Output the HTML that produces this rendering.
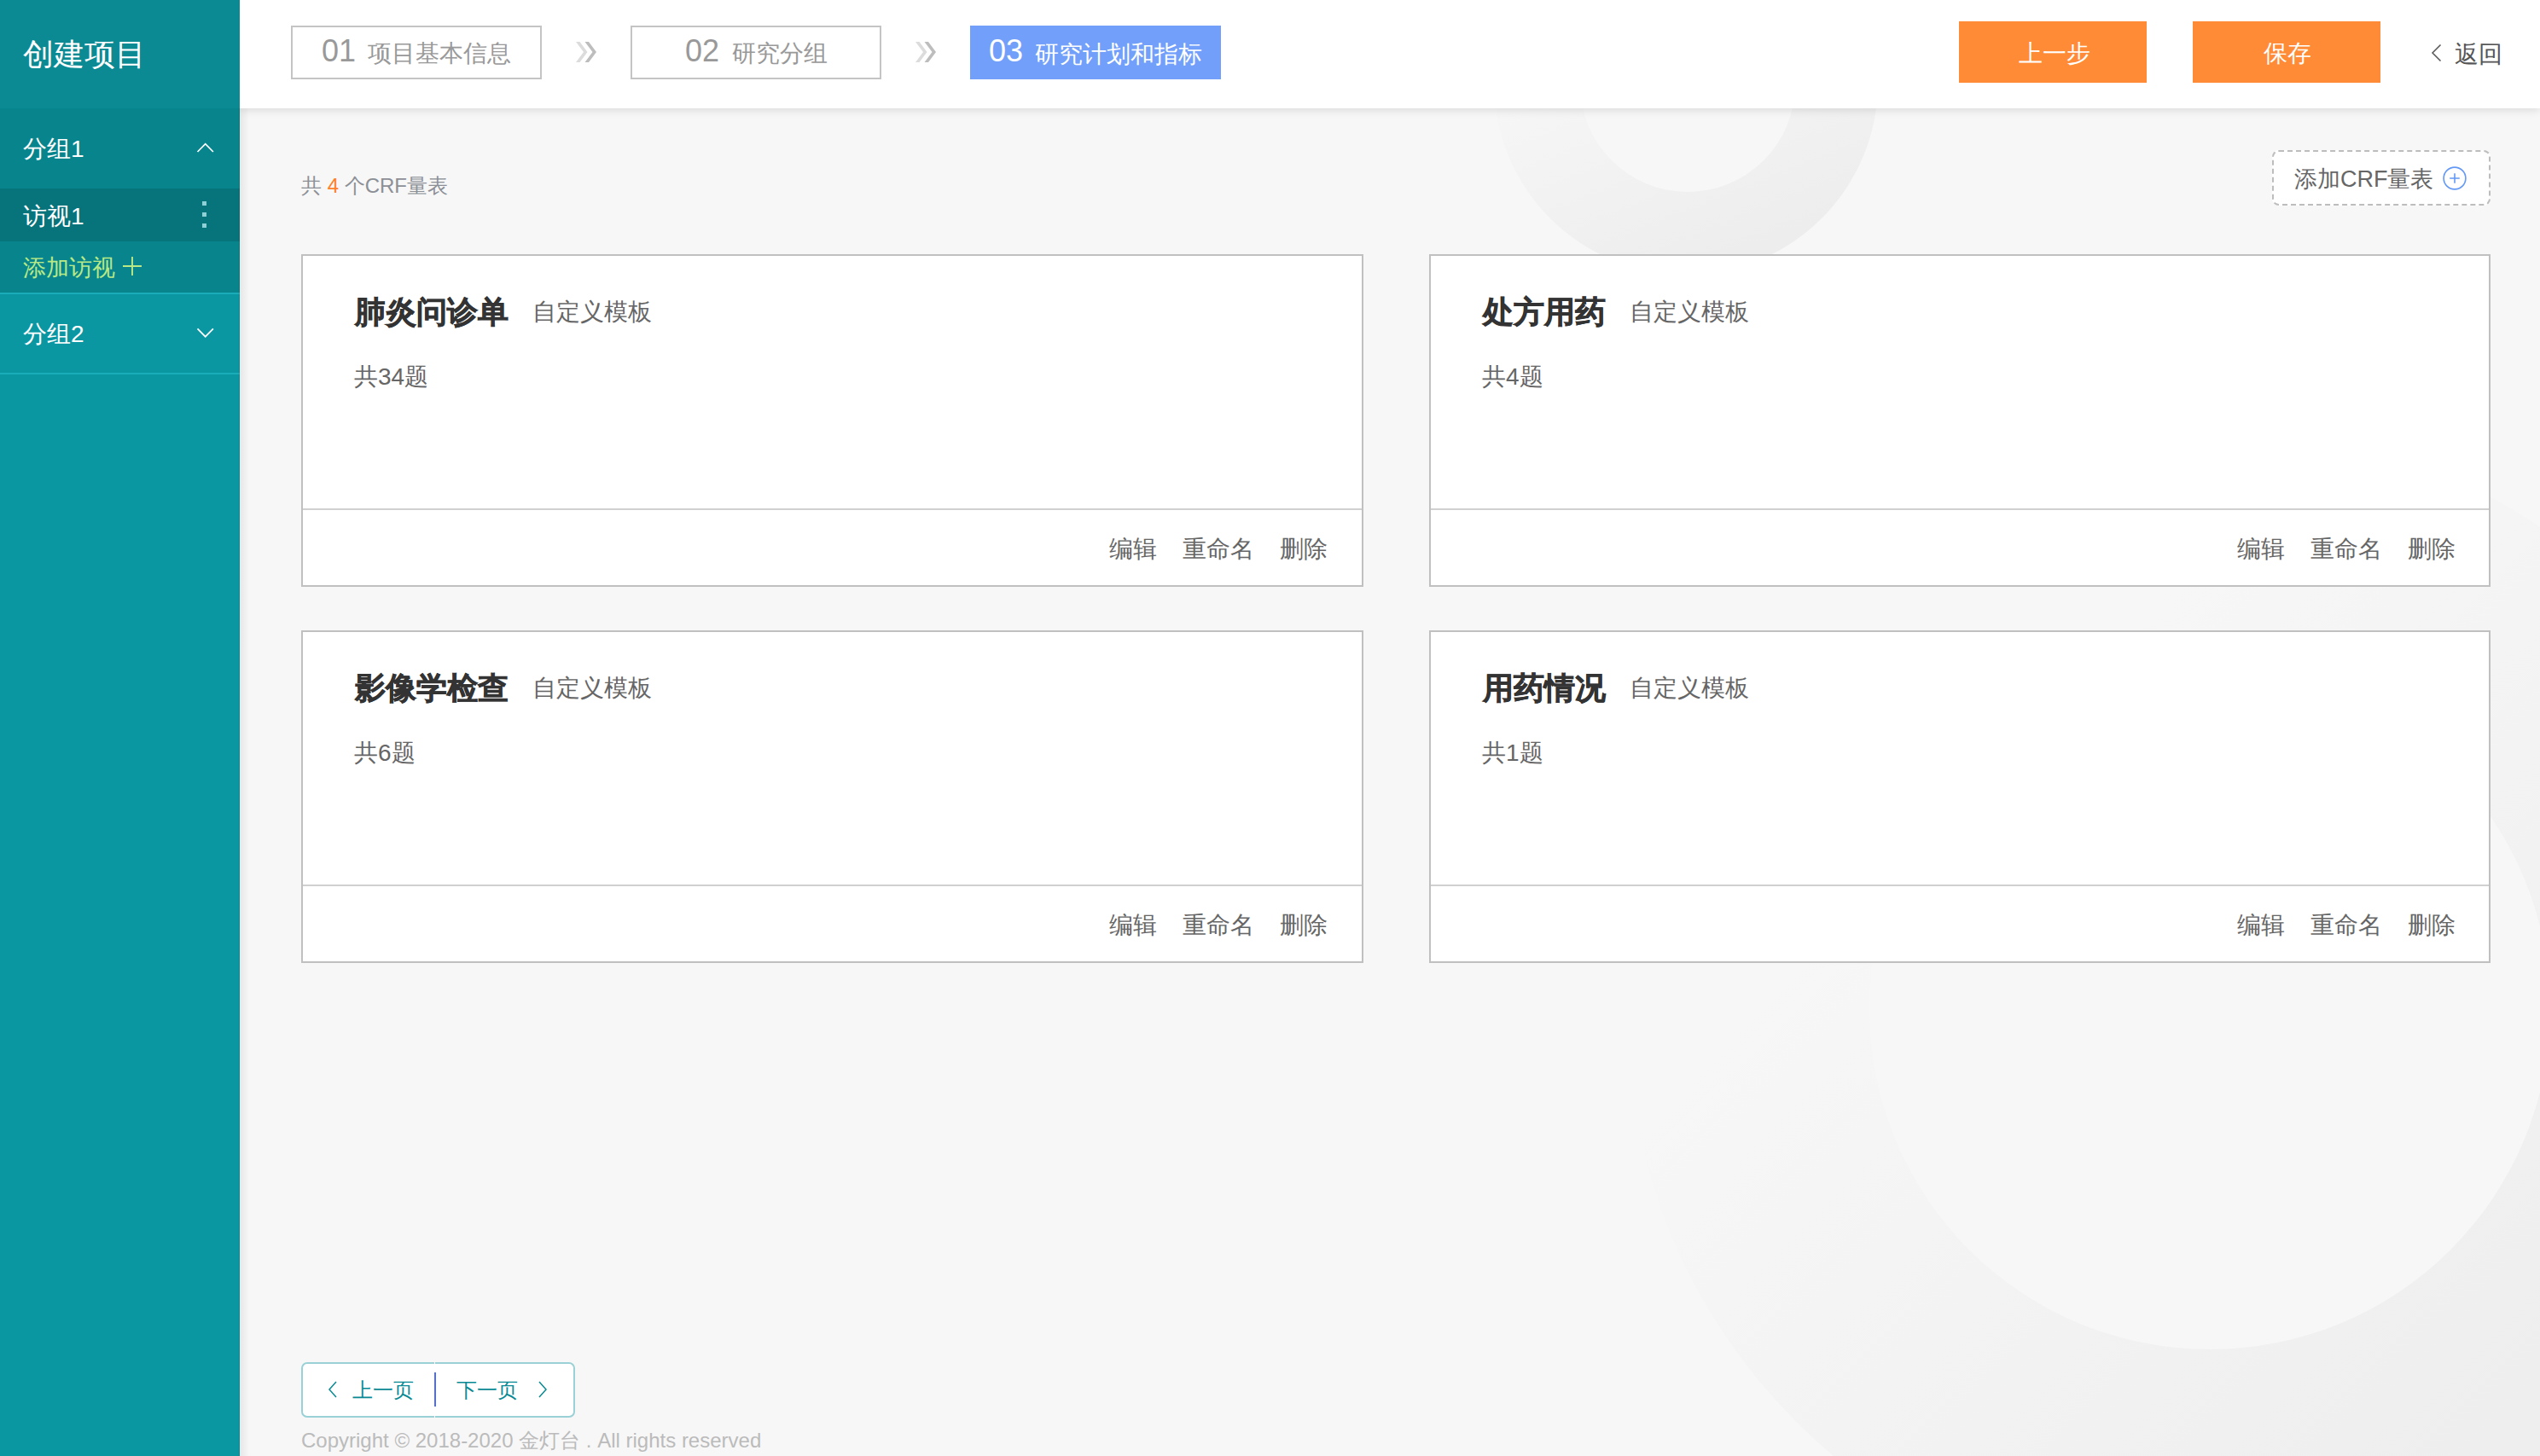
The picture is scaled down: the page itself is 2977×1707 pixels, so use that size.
<!DOCTYPE html>
<html>
<head>
<meta charset="utf-8">
<style>
*{margin:0;padding:0;box-sizing:border-box}
html,body{width:2977px;height:1707px;overflow:hidden;background:#f7f7f7;font-family:"Liberation Sans",sans-serif}
.abs{position:absolute;white-space:nowrap}
#side{position:absolute;left:0;top:0;width:281px;height:1707px;background:#0b97a2;z-index:5}
#side .edge{position:absolute;left:280px;top:127px;width:1px;height:1580px;background:rgba(0,40,50,.12)}
#lsh{position:absolute;left:281px;top:127px;width:11px;height:1580px;background:linear-gradient(to right,#e6e6e6,rgba(230,230,230,0))}
#side .hd{position:absolute;left:0;top:0;width:281px;height:127px;background:#0c8a93}
#side .g1{position:absolute;left:0;top:127px;width:281px;height:216px;background:#08858c}
#side .v1{position:absolute;left:0;top:221px;width:281px;height:62px;background:#07737b}
#side .sep{position:absolute;left:0;width:281px;height:2px;background:#1aacb8}
#hdr{position:absolute;left:281px;top:0;width:2696px;height:127px;background:#fff;box-shadow:0 2px 10px rgba(0,0,0,.12)}
.step{position:absolute;top:30px;width:294px;height:63px;border:2px solid #c4c4c4;background:#fff;color:#999}
.step.on{border:none;background:#729ff9;color:#fff}
.btn{position:absolute;top:25px;width:220px;height:72px;background:#ff8b36;color:#fff}
.card{position:absolute;width:1245px;height:390px;background:#fff;border:2px solid #c0c0c0}
.card .div{position:absolute;left:0;right:0;top:296px;height:2px;background:#d0d0d0}
.t{font-size:28px;line-height:28px}
</style>
</head>
<body>
<!-- background rings -->
<svg class="abs" style="left:0;top:0" width="2977" height="1707">
  <defs>
    <linearGradient id="rg1" x1="0.25" y1="0" x2="0.65" y2="1">
      <stop offset="0.35" stop-color="#f7f7f7"/>
      <stop offset="0.95" stop-color="#ededed"/>
    </linearGradient>
    <linearGradient id="rg2" x1="0" y1="0" x2="1" y2="1">
      <stop offset="0.3" stop-color="#f7f7f7"/>
      <stop offset="0.8" stop-color="#eeeeee"/>
    </linearGradient>
  </defs>
  <circle cx="1976" cy="97" r="225" fill="url(#rg1)"/>
  <circle cx="1978" cy="99" r="126" fill="#f7f7f7"/>
  <circle cx="2590" cy="1183" r="685" fill="url(#rg2)"/>
  <circle cx="2590" cy="1183" r="399" fill="#f7f7f7"/>
</svg>


<div id="side">
  <div class="hd"></div>
  <div class="g1"></div>
  <div class="v1"></div>
  <div class="sep" style="top:343px"></div>
  <div class="sep" style="top:437px"></div>
  <div class="edge"></div>
  <div class="abs" id="s_title" style="left:27px;top:46px;font-size:36px;line-height:36px;color:#fff">创建项目</div>
  <div class="abs t" id="s_g1" style="left:27px;top:161px;color:#fff">分组1</div>
  <svg class="abs" style="left:229px;top:165px" width="24" height="16"><polyline points="2.5,13 11.7,3.6 20.9,13" fill="none" stroke="#fff" stroke-width="1.7"/></svg>
  <div class="abs t" id="s_v1" style="left:27px;top:240px;color:#fff">访视1</div>
  <div class="abs" style="left:237px;top:236px;width:5px;height:5px;background:#8fd0d6"></div>
  <div class="abs" style="left:237px;top:249px;width:5px;height:5px;background:#8fd0d6"></div>
  <div class="abs" style="left:237px;top:262px;width:5px;height:5px;background:#8fd0d6"></div>
  <div class="abs" id="s_add" style="left:27px;top:300px;font-size:27px;line-height:28px;color:#b8e986">添加访视</div><svg class="abs" style="left:143px;top:300px" width="24" height="24"><path d="M1 12H23M12 1V23" stroke="#b8e986" stroke-width="1.9"/></svg>
  <div class="abs t" id="s_g2" style="left:27px;top:378px;color:#fff">分组2</div>
  <svg class="abs" style="left:229px;top:381px" width="24" height="16"><polyline points="2.5,4.3 11.7,13.7 20.9,4.3" fill="none" stroke="#fff" stroke-width="1.7"/></svg>
</div>

<div id="lsh"></div>
<div id="hdr"></div>
<div class="step" style="left:341px"><div class="abs" style="left:34px;top:10px;font-size:36px;line-height:36px">01</div><div class="abs t" style="left:88px;top:17px">项目基本信息</div></div>
<svg class="abs" style="left:670px;top:45px" width="34" height="32"><polygon points="5,4 9.5,4 18.5,16 9.5,28 5,28 14,16" fill="#dcdcdc"/><polygon points="15.5,4 20,4 29,16 20,28 15.5,28 24.5,16" fill="#bdbdbd"/></svg>
<div class="step" style="left:739px"><div class="abs" style="left:62px;top:10px;font-size:36px;line-height:36px">02</div><div class="abs t" style="left:117px;top:17px">研究分组</div></div>
<svg class="abs" style="left:1068px;top:45px" width="34" height="32"><polygon points="5,4 9.5,4 18.5,16 9.5,28 5,28 14,16" fill="#dcdcdc"/><polygon points="15.5,4 20,4 29,16 20,28 15.5,28 24.5,16" fill="#bdbdbd"/></svg>
<div class="step on" style="left:1137px"><div class="abs" style="left:22px;top:12px;font-size:36px;line-height:36px">03</div><div class="abs t" style="left:76px;top:20px">研究计划和指标</div></div>

<div class="btn" style="left:2296px"><div class="abs t" style="left:70px;top:24px">上一步</div></div>
<div class="btn" style="left:2570px"><div class="abs t" style="left:83px;top:24px">保存</div></div>
<svg class="abs" style="left:2848px;top:50px" width="16" height="24"><polyline points="12.5,2.5 3,12 12.5,21.5" fill="none" stroke="#555" stroke-width="1.5"/></svg>
<div class="abs t" style="left:2877px;top:50px;color:#555">返回</div>

<div class="abs" id="cnt" style="left:353px;top:206px;font-size:24px;line-height:24px;color:#8c9096">共 <span style="color:#ff7f2a">4</span> 个CRF量表</div>

<div class="abs" style="left:2663px;top:176px;width:256px;height:65px;border:2px dashed #bdbdbd;border-radius:8px;background:#fff"></div>
<div class="abs" style="left:2689px;top:197px;font-size:27px;line-height:27px;color:#666">添加CRF量表</div>
<svg class="abs" style="left:2862px;top:194px" width="30" height="30"><circle cx="15" cy="15" r="12.9" fill="none" stroke="#6398f5" stroke-width="1.6"/><path d="M9.2 15H20.8M15 9.2V20.8" stroke="#6398f5" stroke-width="1.6"/></svg>
<div class="card" style="left:353px;top:298px">
  <div class="abs" style="left:61px;top:48px;font-size:36px;line-height:36px;font-weight:bold;color:#333;-webkit-text-stroke:0.7px #333">肺炎问诊单</div>
  <div class="abs t" style="left:269px;top:52px;color:#666">自定义模板</div>
  <div class="abs t" style="left:60px;top:128px;color:#666">共34题</div>
  <div class="div"></div>
  <div class="abs t" style="left:945px;top:330px;color:#666">编辑</div>
  <div class="abs t" style="left:1031px;top:330px;color:#666">重命名</div>
  <div class="abs t" style="left:1145px;top:330px;color:#666">删除</div>
</div>
<div class="card" style="width:1244px;left:1675px;top:298px">
  <div class="abs" style="left:61px;top:48px;font-size:36px;line-height:36px;font-weight:bold;color:#333;-webkit-text-stroke:0.7px #333">处方用药</div>
  <div class="abs t" style="left:233px;top:52px;color:#666">自定义模板</div>
  <div class="abs t" style="left:60px;top:128px;color:#666">共4题</div>
  <div class="div"></div>
  <div class="abs t" style="left:945px;top:330px;color:#666">编辑</div>
  <div class="abs t" style="left:1031px;top:330px;color:#666">重命名</div>
  <div class="abs t" style="left:1145px;top:330px;color:#666">删除</div>
</div>
<div class="card" style="left:353px;top:739px">
  <div class="abs" style="left:61px;top:48px;font-size:36px;line-height:36px;font-weight:bold;color:#333;-webkit-text-stroke:0.7px #333">影像学检查</div>
  <div class="abs t" style="left:269px;top:52px;color:#666">自定义模板</div>
  <div class="abs t" style="left:60px;top:128px;color:#666">共6题</div>
  <div class="div"></div>
  <div class="abs t" style="left:945px;top:330px;color:#666">编辑</div>
  <div class="abs t" style="left:1031px;top:330px;color:#666">重命名</div>
  <div class="abs t" style="left:1145px;top:330px;color:#666">删除</div>
</div>
<div class="card" style="width:1244px;left:1675px;top:739px">
  <div class="abs" style="left:61px;top:48px;font-size:36px;line-height:36px;font-weight:bold;color:#333;-webkit-text-stroke:0.7px #333">用药情况</div>
  <div class="abs t" style="left:233px;top:52px;color:#666">自定义模板</div>
  <div class="abs t" style="left:60px;top:128px;color:#666">共1题</div>
  <div class="div"></div>
  <div class="abs t" style="left:945px;top:330px;color:#666">编辑</div>
  <div class="abs t" style="left:1031px;top:330px;color:#666">重命名</div>
  <div class="abs t" style="left:1145px;top:330px;color:#666">删除</div>
</div>

<div class="abs" style="left:353px;top:1597px;width:321px;height:65px;border:2px solid #99d1d6;border-radius:7px;background:#fff"></div>
<div class="abs" style="left:509px;top:1609px;width:2px;height:40px;background:#4a6cf7"></div>
<div class="abs" style="left:509px;top:1597px;width:1px;height:2px;background:#fff"></div>
<div class="abs" style="left:509px;top:1660px;width:1px;height:2px;background:#fff"></div>
<svg class="abs" style="left:382px;top:1617px" width="16" height="24"><polyline points="12,3 4,12 12,21" fill="none" stroke="#0b8a93" stroke-width="1.5"/></svg>
<div class="abs" style="left:413px;top:1618px;font-size:24px;line-height:24px;color:#0a8a94">上一页</div>
<div class="abs" style="left:535px;top:1618px;font-size:24px;line-height:24px;color:#0a8a94">下一页</div>
<svg class="abs" style="left:628px;top:1617px" width="16" height="24"><polyline points="4,3 12,12 4,21" fill="none" stroke="#0b8a93" stroke-width="1.5"/></svg>
<div class="abs" style="left:353px;top:1677px;font-size:24px;line-height:24px;color:#bbb">Copyright © 2018-2020 金灯台 . All rights reserved</div>
</body>
</html>
